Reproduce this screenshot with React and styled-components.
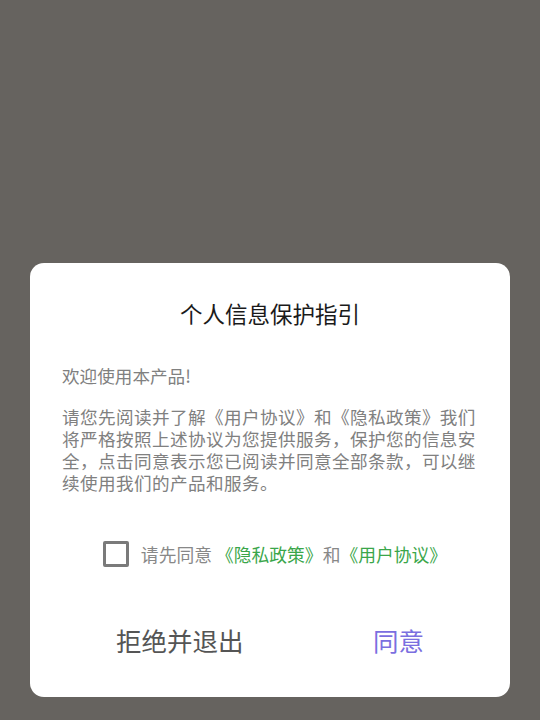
import React, { useState } from "react";
import styled, { createGlobalStyle } from "styled-components";

const Global = createGlobalStyle`
  html, body {
    margin: 0;
    padding: 0;
    background: #66635f;
  }
  body {
    font-family: "Noto Sans CJK SC", "Noto Sans", sans-serif;
  }
`;

export default function App() {
  const [checked, setChecked] = useState(false);
  return (
    <>
      <Global />
      <Screen>
        <Dialog>
          <Title>个人信息保护指引</Title>
          <Body>
            <p>欢迎使用本产品!</p>
            <p className="main">
              请您先阅读并了解《用户协议》和《隐私政策》我们将严格按照上述协议为您提供服务，保护您的信息安全，点击同意表示您已阅读并同意全部条款，可以继续使用我们的产品和服务。
            </p>
          </Body>
          <Agree onClick={() => setChecked(!checked)}>
            <Box $checked={checked} />
            <span>
              请先同意 <Link>《隐私政策》</Link>和<Link>《用户协议》</Link>
            </span>
          </Agree>
          <Actions>
            <ActionButton>拒绝并退出</ActionButton>
            <ActionButton $primary>同意</ActionButton>
          </Actions>
        </Dialog>
      </Screen>
    </>
  );
}

const Screen = styled.div`
  width: 540px;
  height: 720px;
  display: flex;
  flex-direction: column;
  justify-content: flex-end;
  align-items: center;
  padding-bottom: 23px;
  box-sizing: border-box;
`;

const Dialog = styled.div`
  width: 480px;
  height: 434px;
  box-sizing: border-box;
  background: #fff;
  border-radius: 14px;
  padding: 35px 32px 37px;
  display: flex;
  flex-direction: column;
`;

const Title = styled.h1`
  margin: 0;
  font-size: 22.5px;
  line-height: 30px;
  font-weight: 400;
  color: #1a1a1a;
  text-align: center;
`;

const Body = styled.div`
  margin-top: 37px;
  color: #808080;
  font-size: 17.6px;
  line-height: 22px;
  p {
    margin: 0;
  }
  .main {
    margin-top: 19px;
    letter-spacing: 0.4px;
  }
`;

const Agree = styled.div`
  margin-top: 47px;
  display: flex;
  align-items: center;
  justify-content: center;
  gap: 12px;
  font-size: 17.8px;
  color: #888;
  cursor: pointer;
  padding-left: 10px;
`;

const Box = styled.div`
  width: 26px;
  height: 26px;
  box-sizing: border-box;
  border: 3px solid #7a7a7a;
  border-radius: 2px;
  background: ${(p) => (p.$checked ? "#7a7a7a" : "transparent")};
`;

const Link = styled.span`
  color: #3aa64a;
`;

const Actions = styled.div`
  margin-top: auto;
  display: flex;
  justify-content: space-between;
  padding: 0 54px;
`;

const ActionButton = styled.button`
  border: none;
  background: none;
  padding: 0;
  font-family: inherit;
  font-size: 25.5px;
  line-height: 40px;
  color: ${(p) => (p.$primary ? "#7b6fe0" : "#555")};
  cursor: pointer;
`;
